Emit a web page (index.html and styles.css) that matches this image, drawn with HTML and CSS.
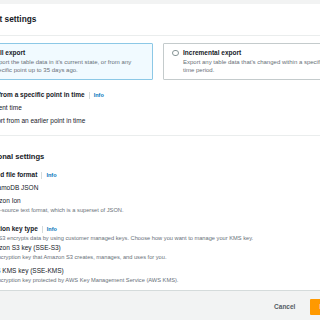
FILE: index.html
```html
<!DOCTYPE html>
<html lang="en">
<head>
  <meta charset="UTF-8">
  <meta name="viewport" content="width=device-width, initial-scale=1.0">
  <title>Export settings</title>
  <link rel="stylesheet" href="styles.css">
</head>
<body>

  <div class="page">
    <div class="panel">
      <div class="panel-header">
        <h2>Export settings</h2>
      </div>

      <!-- 导出类型 -->
      <div class="panel-section">
        <div class="tiles">
          <div class="tile selected">
            <span class="radio checked"></span>
            <div class="tile-text">
              <span class="tile-title">Full export</span>
              <span class="desc">Export the table data in it's current state, or from any specific point up to 35 days ago.</span>
            </div>
          </div>
          <div class="tile">
            <span class="radio"></span>
            <div class="tile-text">
              <span class="tile-title">Incremental export</span>
              <span class="desc">Export any table data that's changed within a specific time period.</span>
            </div>
          </div>
        </div>

        <div class="field">
          <div class="field-label">Export from a specific point in time<span class="sep"></span><a href="javascript:;" class="info">Info</a></div>
          <ul class="options">
            <li class="option"><span class="radio checked"></span><span class="option-text">Current time</span></li>
            <li class="option"><span class="radio"></span><span class="option-text">Export from an earlier point in time</span></li>
          </ul>
        </div>
      </div>

      <!-- 其他设置 -->
      <div class="panel-section additional">
        <h3>Additional settings</h3>

        <div class="field">
          <div class="field-label">Exported file format<span class="sep"></span><a href="javascript:;" class="info">Info</a></div>
          <ul class="options">
            <li class="option"><span class="radio checked"></span><span class="option-text">DynamoDB JSON</span></li>
            <li class="option">
              <span class="radio"></span>
              <div class="option-text">Amazon Ion<span class="desc">Open-source text format, which is a superset of JSON.</span></div>
            </li>
          </ul>
        </div>

        <div class="field spaced">
          <div class="field-label">Encryption key type<span class="sep"></span><a href="javascript:;" class="info">Info</a></div>
          <span class="desc">Amazon S3 encrypts data by using customer managed keys. Choose how you want to manage your KMS key.</span>
          <ul class="options tight">
            <li class="option">
              <span class="radio checked"></span>
              <div class="option-text">Amazon S3 key (SSE-S3)<span class="desc">An encryption key that Amazon S3 creates, manages, and uses for you.</span></div>
            </li>
            <li class="option">
              <span class="radio"></span>
              <div class="option-text">AWS KMS key (SSE-KMS)<span class="desc">An encryption key protected by AWS Key Management Service (AWS KMS).</span></div>
            </li>
          </ul>
        </div>
      </div>
    </div>

    <div class="actions">
      <a href="javascript:;" class="btn">Cancel</a>
      <a href="javascript:;" class="btn btn-primary">Export</a>
    </div>
  </div>

</body>
</html>
```

FILE: styles.css
```css
 *{
   box-sizing: border-box;
 }
 body{
   margin: 0;
   overflow: hidden;
   background-color: #f2f3f3;
   color: #16191f;
   font-family: "Liberation Sans", Arial, sans-serif;
 }
 a{
   text-decoration: none;
 }
 ul{
   margin: 0;
   padding: 0;
   list-style: none;
 }
 .page{
   width: 400px;
   margin-left: -36px;
   padding-top: 4px;
 }
 .panel{
   background-color: #fff;
   border-bottom: 1px solid #d5dbdb;
 }
 .panel-header{
   height: 32px;
   padding-left: 12px;
   border-bottom: 1px solid #eaeded;
 }
 .panel-header h2{
   margin: 0;
   font-size: 8.3px;
   line-height: 31px;
   font-weight: 700;
 }
 .panel-section{
   padding: 7px 12px 9px;
 }
 .panel-section.additional{
   padding: 15px 12px 6px;
   border-top: 1px solid #eaeded;
 }
 .panel-section h3{
   margin: 0;
   font-size: 7.6px;
   line-height: 12px;
   font-weight: 700;
 }
 /* 卡片 */
 .tiles{
   display: grid;
   grid-template-columns: 181px 181px;
   gap: 10px;
   margin-left: -4px;
 }
 .tile{
   display: flex;
   align-items: flex-start;
   gap: 4.5px;
   padding: 4px 8px 5px;
   border: 1px solid #c4cbcc;
   border-radius: 1px;
 }
 .tile.selected{
   border-color: #8cc8e6;
   background-color: #f1faff;
 }
 .tile-title{
   display: block;
   font-size: 6.5px;
   line-height: 10px;
   font-weight: 700;
 }
 .desc{
   display: block;
   font-size: 5.7px;
   line-height: 8px;
   font-weight: 400;
   color: #687078;
 }
 .tile .desc{
   font-size: 6px;
 }
 .radio{
   flex: none;
   width: 6.5px;
   height: 6.5px;
   margin-top: 1.75px;
   border: 1px solid #879596;
   border-radius: 50%;
   background-color: #fff;
 }
 .radio.checked{
   border: 2px solid #0073bb;
 }
 /* 表单项 */
 .field{
   margin-top: 10px;
 }
 .additional .field{
   margin-top: 7px;
 }
 .additional .field.spaced{
   margin-top: 10px;
 }
 .field-label{
   display: flex;
   align-items: center;
   font-size: 6.5px;
   line-height: 10px;
   font-weight: 700;
 }
 .sep{
   width: 1px;
   height: 7px;
   margin: 0 4px;
   background-color: #d5dbdb;
 }
 .info{
   font-size: 5.5px;
   font-weight: 700;
   color: #0073bb;
 }
 .options{
   display: flex;
   flex-direction: column;
   gap: 3px;
   margin-top: 3px;
 }
 .options.tight{
   gap: 5px;
   margin-top: 1px;
 }
 .option{
   display: flex;
   align-items: flex-start;
   gap: 3.5px;
 }
 .option-text{
   font-size: 6.5px;
   line-height: 10px;
 }
 /* 底部按钮 */
 .actions{
   display: flex;
   justify-content: flex-end;
   align-items: center;
   gap: 8px;
   padding: 8px 15px 0 0;
 }
 .btn{
   display: block;
   height: 16px;
   padding: 0 7px;
   font-size: 6.5px;
   line-height: 16px;
   font-weight: 700;
   color: #545b64;
   border-radius: 1px;
 }
 .btn-primary{
   padding: 0 9px;
   background-color: #ff9900;
   color: #fff;
 }
```
